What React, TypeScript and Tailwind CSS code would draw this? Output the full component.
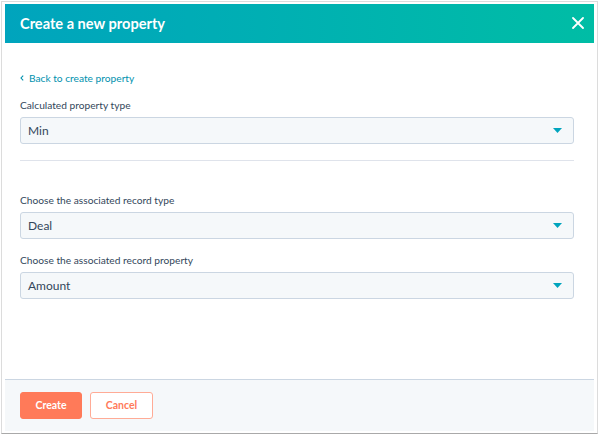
import React from 'react'

const font = { fontFamily: 'Lato, "Open Sans", sans-serif' }

function Caret() {
  return (
    <svg width="9" height="5" viewBox="0 0 9 5" className="shrink-0">
      <path d="M0 0 H9 L4.5 5 Z" fill="#00a4bd" />
    </svg>
  )
}

function SelectBox({ value }: { value: string }) {
  return (
    <div className="flex h-[27px] items-center justify-between rounded-[3px] border border-[#cbd6e2] bg-[#f5f8fa] pl-[7px] pr-[11px]">
      <span className="text-[12px] text-[#33475b]">{value}</span>
      <Caret />
    </div>
  )
}

function Field({ label, value }: { label: string; value: string }) {
  return (
    <div>
      <label className="mb-[5px] block text-[10.2px] leading-[14px] text-[#33475b]">{label}</label>
      <SelectBox value={value} />
    </div>
  )
}

export default function App(): React.JSX.Element {
  return (
    <div className="h-[435px] w-[599px] bg-white p-px" style={font}>
      <div className="h-[433px] w-[597px] border border-[#dcdcdc] border-b-[#a9a9a9] px-[3px] pt-[2px] pb-[2px]">
        <div className="flex h-full flex-col">
          {/* header */}
          <div className="flex h-[39px] items-center justify-between bg-gradient-to-r from-[#00a4bd] to-[#00bda5] pl-[15px] pr-[10px]">
            <h1 className="text-[14.6px] font-bold text-white">Create a new property</h1>
            <svg width="12" height="12" viewBox="0 0 12 12" className="mb-[2px]">
              <path d="M1 1 L11 11 M11 1 L1 11" stroke="white" strokeWidth="1.8" strokeLinecap="round" />
            </svg>
          </div>

          {/* body */}
          <div className="flex-1 pl-[15px] pr-[20px] pt-[28px]">
            <a className="flex items-center gap-[5px] text-[10.2px] leading-[14px] text-[#0091ae]">
              <svg width="4" height="6" viewBox="0 0 4 6">
                <path d="M3.2 0.6 L1 3 L3.2 5.4" stroke="#0091ae" strokeWidth="1.1" fill="none" />
              </svg>
              Back to create property
            </a>
            <div className="mt-[13px]">
              <Field label="Calculated property type" value="Min" />
            </div>
            <div className="mt-[16px] h-px bg-[#dfe3eb]" />
            <div className="mt-[32px] flex flex-col gap-[14px]">
              <Field label="Choose the associated record type" value="Deal" />
              <Field label="Choose the associated record property" value="Amount" />
            </div>
          </div>

          {/* footer */}
          <div className="flex h-[52px] items-center gap-[8px] border-t border-[#cbd6e2] bg-[#f5f8fa] px-[15px]">
            <button className="h-[27px] w-[62px] rounded-[3px] border border-[#ff7a59] bg-[#ff7a59] text-[10.5px] font-bold text-white">
              Create
            </button>
            <button className="h-[27px] w-[63px] rounded-[3px] border border-[#ffab96] bg-white text-[10.5px] font-bold text-[#ff7a59]">
              Cancel
            </button>
          </div>
        </div>
      </div>
    </div>
  )
}
